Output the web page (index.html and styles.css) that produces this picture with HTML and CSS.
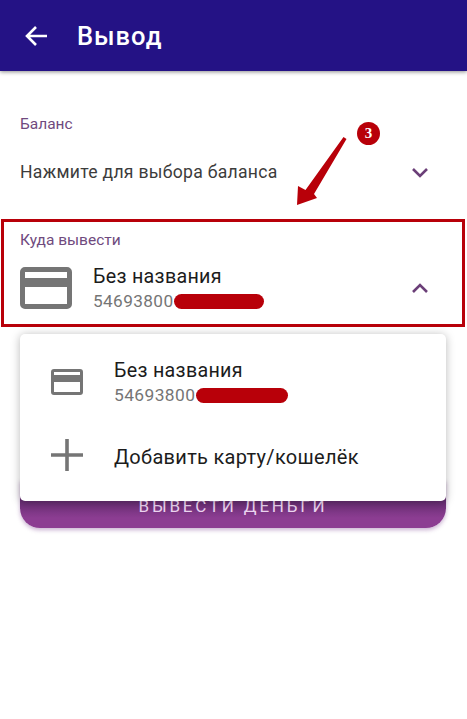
FILE: index.html
```html
<!DOCTYPE html>
<html>
<head>
<meta charset="utf-8">
<title>Вывод</title>
<link rel="stylesheet" href="styles.css">
</head>
<body>
<header class="toolbar">
	<svg class="back" width="24" height="22" viewBox="0 0 24 22"><path d="M23 11H3M12 2l-9 9 9 9" fill="none" stroke="#fff" stroke-width="2.6"/></svg>
	<h1>Вывод</h1>
</header>

<main class="content">
	<section class="balance">
		<div class="label">Баланс</div>
		<div class="balance-row">
			<span>Нажмите для выбора баланса</span>
			<svg class="chev" width="18" height="11" viewBox="0 0 18 11"><path d="M2 2l7 7 7-7" fill="none" stroke="#6b3f78" stroke-width="2.6"/></svg>
		</div>
	</section>

	<section class="target">
		<div class="label">Куда вывести</div>
		<div class="target-row">
			<svg class="card" width="52" height="42" viewBox="0 0 52 42"><path fill-rule="evenodd" fill="#757575" d="M5 0h42a5 5 0 0 1 5 5v32a5 5 0 0 1-5 5H5a5 5 0 0 1-5-5V5a5 5 0 0 1 5-5zM5 5v6h42V5zM5 20v17h42V20z"/></svg>
			<div class="card-text">
				<div class="card-name">Без названия</div>
				<div class="card-num">54693800<span class="redact"></span></div>
			</div>
			<svg class="chev" width="18" height="11" viewBox="0 0 18 11"><path d="M2 9l7-7 7 7" fill="none" stroke="#6b3f78" stroke-width="2.6"/></svg>
		</div>
	</section>

	<button class="withdraw">ВЫВЕСТИ ДЕНЬГИ</button>
</main>

<!-- dropdown lies over the button -->
<div class="menu">
	<div class="menu-item">
		<svg class="menu-icon" width="32" height="26" viewBox="0 0 32 26"><path fill-rule="evenodd" fill="#757575" d="M3 0h26a3 3 0 0 1 3 3v20a3 3 0 0 1-3 3H3a3 3 0 0 1-3-3V3a3 3 0 0 1 3-3zM3 3v3h26V3zM3 13v10h26V13z"/></svg>
		<div class="card-text">
			<div class="menu-name">Без названия</div>
			<div class="menu-num">54693800<span class="redact"></span></div>
		</div>
	</div>
	<div class="menu-item add">
		<svg class="menu-icon" width="32" height="32" viewBox="0 0 32 32"><path d="M16 0v32M0 16h32" fill="none" stroke="#757575" stroke-width="3.600"/></svg>
		<div class="menu-name add-name">Добавить карту/кошелёк</div>
	</div>
</div>

<!-- annotation: arrow and step number -->
<svg class="arrow" width="56" height="74" viewBox="0 0 56 74"><path fill="#b80009" d="M47.500 1L50.500 3 18 58 21 62 1 69 2 50 9.500 54z"/></svg>
<div class="step">3</div>
</body>
</html>
```

FILE: styles.css
```css
/* page */
body {
	margin: 0;
	height: 719px;
	overflow: hidden;
	position: relative;
	background: #fff;
	font-family: Roboto, "Liberation Sans", sans-serif;
	color: #1c1c1c;
}

/* top bar */
.toolbar {
	height: 71px;
	box-sizing: border-box;
	padding-left: 24px;
	display: flex;
	align-items: center;
	background: #241285;
	box-shadow: 0 1px 4px rgba(0, 0, 0, .45);
}
.back {
	margin-right: 29px;
}
.toolbar h1 {
	margin: 0;
	color: #fff;
	font-size: 25.5px;
	font-weight: 500;
	letter-spacing: 1px;
}

.content {
	display: flex;
	flex-direction: column;
}

.label {
	color: #6f4a7e;
	font-size: 15.5px;
	line-height: 18px;
}

/* balance select */
.balance {
	padding: 44px 38px 0 20px;
	height: 104px;
}
.balance-row {
	margin-top: 27px;
	display: flex;
	justify-content: space-between;
	align-items: center;
	font-size: 17.6px;
	line-height: 24px;
	color: #3c3c3c;
	letter-spacing: .28px;
}

/* highlighted select */
.target {
	margin: 0 2px 0 1px;
	height: 108px;
	box-sizing: border-box;
	border: 3px solid #b80009;
	padding: 9px 33px 0 16px;
}
.target-row {
	margin-top: 15px;
	display: flex;
	align-items: center;
}
.card {
	margin-right: 21px;
}
.card-text {
	flex: 1;
}
.card-name {
	font-size: 19.7px;
	line-height: 26px;
	letter-spacing: .3px;
}
.card-num {
	font-size: 17.2px;
	line-height: 22px;
	color: #757575;
	display: flex;
	align-items: center;
	letter-spacing: .4px;
}
.redact {
	display: inline-block;
	width: 90px;
	height: 15px;
	margin-left: 1px;
	border-radius: 8px;
	background: #b80009;
}

/* button under the menu */
.withdraw {
	margin: 153px 21px 0 20px;
	height: 48px;
	border: 0;
	padding: 4px 0 0 0;
	border-radius: 0 0 20px 20px;
	background: linear-gradient(to bottom, #642c70 20px, #8c3d92 38px);
	box-shadow: 0 2px 4px rgba(120, 60, 140, .4);
	color: #ecd4f0;
	font-family: inherit;
	font-size: 17px;
	letter-spacing: 2.8px;
}

/* dropdown */
.menu {
	position: absolute;
	left: 20px;
	top: 334px;
	width: 426px;
	height: 167px;
	box-sizing: border-box;
	padding: 15px 0 0 31px;
	background: #fff;
	border-radius: 5px;
	box-shadow: 0 1px 10px rgba(0, 0, 0, .28);
}
.menu-item {
	display: flex;
	align-items: center;
	height: 66px;
}
.menu-item.add {
	height: 64px;
	margin-top: 10px;
}
.add .menu-icon {
	margin-bottom: 4px;
}
.menu-icon {
	margin-right: 31px;
	flex: none;
}
.menu-name {
	font-size: 19.7px;
	line-height: 26px;
	letter-spacing: .3px;
}
.add-name {
	font-size: 20px;
}
.menu-num {
	font-size: 17.4px;
	line-height: 22px;
	color: #757575;
	display: flex;
	align-items: center;
	letter-spacing: .4px;
}
.menu-num .redact {
	width: 92px;
}

/* annotation */
.arrow {
	position: absolute;
	left: 296px;
	top: 136px;
}
.step {
	position: absolute;
	left: 357px;
	top: 122px;
	width: 23px;
	height: 23px;
	border-radius: 50%;
	background: #b80009;
	color: #fff;
	font-family: "Liberation Serif", serif;
	font-size: 15px;
	font-weight: bold;
	line-height: 23px;
	text-align: center;
}
```
